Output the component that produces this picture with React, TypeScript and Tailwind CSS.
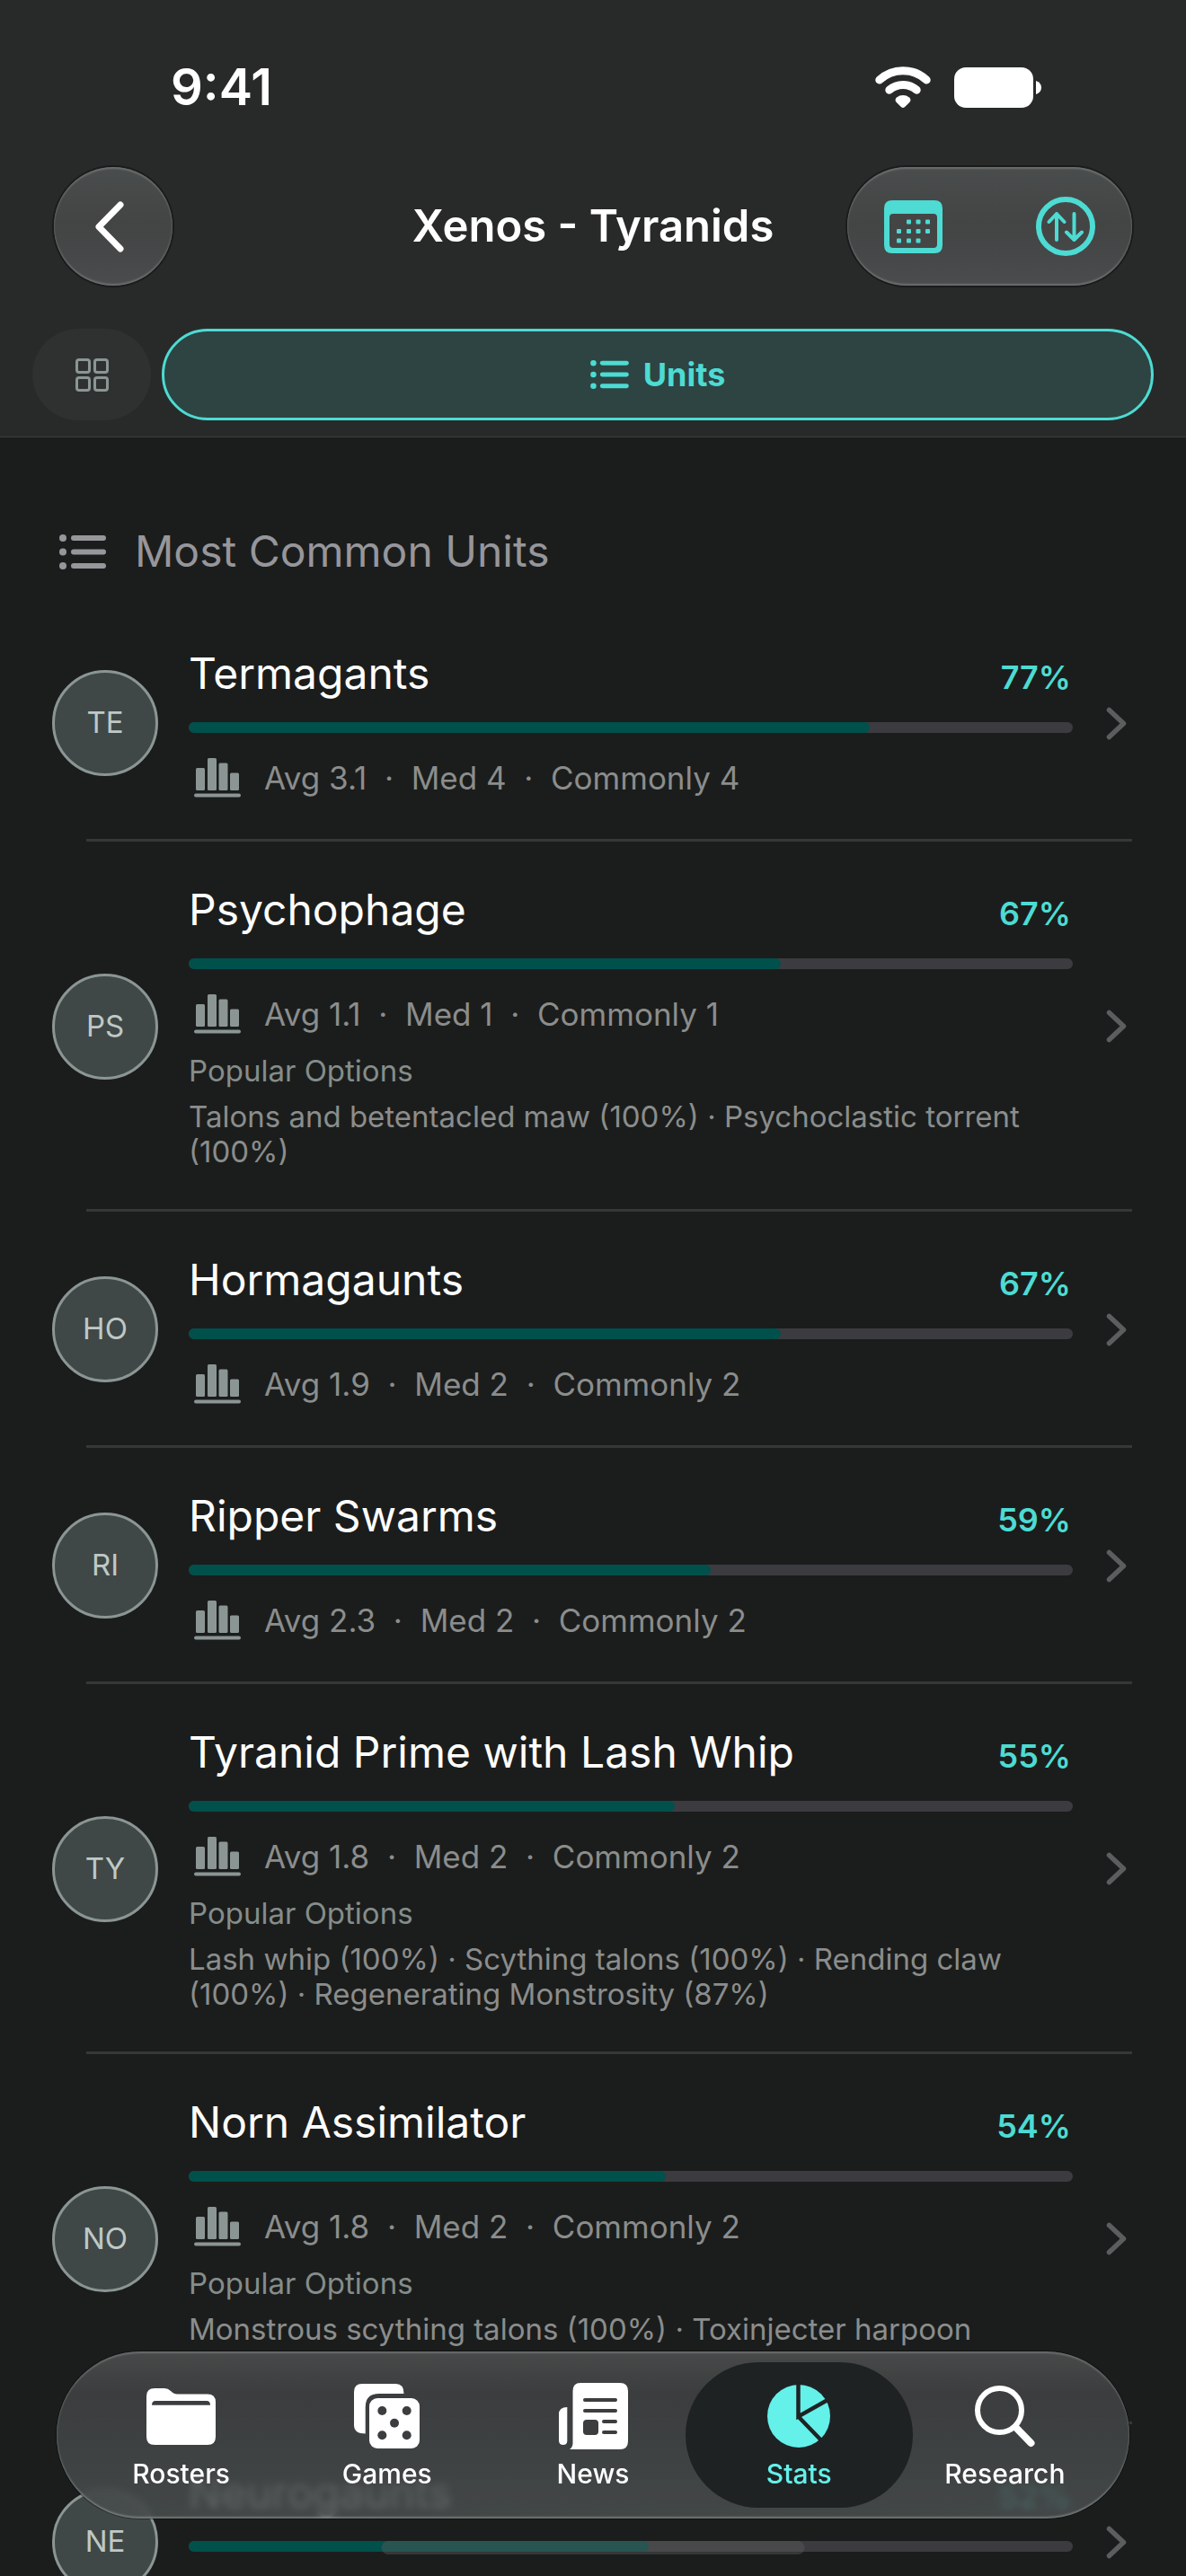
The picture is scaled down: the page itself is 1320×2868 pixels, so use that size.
import type { ReactNode } from "react";

interface Unit {
  initials: string;
  name: string;
  percent: number;
  avg: string;
  median: number;
  common: number;
  options?: string;
}

const UNITS: Unit[] = [
  { initials: "TE", name: "Termagants", percent: 77, avg: "3.1", median: 4, common: 4 },
  {
    initials: "PS",
    name: "Psychophage",
    percent: 67,
    avg: "1.1",
    median: 1,
    common: 1,
    options: "Talons and betentacled maw (100%) · Psychoclastic torrent (100%)",
  },
  { initials: "HO", name: "Hormagaunts", percent: 67, avg: "1.9", median: 2, common: 2 },
  { initials: "RI", name: "Ripper Swarms", percent: 59, avg: "2.3", median: 2, common: 2 },
  {
    initials: "TY",
    name: "Tyranid Prime with Lash Whip",
    percent: 55,
    avg: "1.8",
    median: 2,
    common: 2,
    options: "Lash whip (100%) · Scything talons (100%) · Rending claw (100%) · Regenerating Monstrosity (87%)",
  },
  {
    initials: "NO",
    name: "Norn Assimilator",
    percent: 54,
    avg: "1.8",
    median: 2,
    common: 2,
    options: "Monstrous scything talons (100%) · Toxinjecter harpoon",
  },
  { initials: "NE", name: "Neurogaunts", percent: 52, avg: "1.2", median: 1, common: 1 },
];

function WifiIcon() {
  return (
    <svg viewBox="0 0 62 46" className="h-[46px] w-[62px]" fill="none" stroke="currentColor" strokeWidth="9" strokeLinecap="round">
      <path d="M4.8 15A38.5 38.5 0 0 1 57.2 15" />
      <path d="M15.8 26.2A23 23 0 0 1 46.2 26.2" />
      <path d="M31 46Q30 46 28.6 44.8L23.8 40Q21.2 37 24 34.4Q27 32 31 32Q35 32 38 34.4Q40.8 37 38.2 40L33.4 44.8Q32 46 31 46Z" fill="currentColor" stroke="none" />
    </svg>
  );
}

function BatteryIcon() {
  return (
    <svg viewBox="0 0 98 45" className="h-[45px] w-[98px]" fill="currentColor">
      <rect width="88" height="45" rx="13" />
      <path d="M91 15Q97 17 97 22.5Q97 28 91 30Z" />
    </svg>
  );
}

function ListIcon({ className }: { className: string }) {
  return (
    <svg viewBox="0 0 52 39" className={className} fill="currentColor">
      {[4, 19.5, 35].map((y) => (
        <g key={y}>
          <circle cx="4" cy={y} r="4" />
          <rect x="13" y={y - 3} width="39" height="6" rx="3" />
        </g>
      ))}
    </svg>
  );
}

function GridIcon() {
  return (
    <svg viewBox="0 0 37 37" className="size-[37px]" fill="none" stroke="currentColor" strokeWidth="3">
      <rect x="1.5" y="1.5" width="14" height="14" rx="2.5" />
      <rect x="21.5" y="1.5" width="14" height="14" rx="2.5" />
      <rect x="1.5" y="21.5" width="14" height="14" rx="2.5" />
      <rect x="21.5" y="21.5" width="14" height="14" rx="2.5" />
    </svg>
  );
}

function CalendarIcon() {
  const dots = [
    [25, 21.5], [35.5, 21.5], [46, 21.5],
    [14, 32], [25, 32], [35.5, 32], [46, 32],
    [14, 42.5], [25, 42.5], [35.5, 42.5],
  ];
  return (
    <svg viewBox="0 0 65 59" className="h-[59px] w-[65px]" fill="currentColor">
      <path
        fillRule="evenodd"
        d="M9 0H56Q65 0 65 9V50Q65 59 56 59H9Q0 59 0 50V9Q0 0 9 0ZM10 15Q6 15 6 19V49Q6 53 10 53H55Q59 53 59 49V19Q59 15 55 15Z"
      />
      {dots.map(([x, y]) => (
        <rect key={`${x}-${y}`} x={x} y={y} width="5" height="5" rx="1" />
      ))}
    </svg>
  );
}

function SortIcon() {
  return (
    <svg viewBox="0 0 66 66" className="size-[66px]" fill="none" stroke="currentColor" strokeLinecap="round" strokeLinejoin="round">
      <circle cx="33" cy="33" r="30" strokeWidth="6" />
      <path strokeWidth="4" d="M23 48V19M14.5 28L23 19L31.5 28M42.5 19V48M34 39.5L42.5 48L51 39.5" />
    </svg>
  );
}

function ChartIcon() {
  return (
    <svg viewBox="0 0 52 44" className="h-11 w-[52px] shrink-0 text-[#8b9694]" fill="currentColor">
      <rect x="2" y="11" width="10" height="25" rx="1.5" />
      <rect x="15" y="0" width="10" height="36" rx="1.5" />
      <rect x="27.5" y="5.5" width="10" height="30.5" rx="1.5" />
      <rect x="40" y="16.5" width="10" height="19.5" rx="1.5" />
      <rect x="0" y="39.5" width="52" height="4" rx="2" />
    </svg>
  );
}

function FolderIcon() {
  return (
    <svg viewBox="0 0 77 63" className="h-[63px] w-[77px]" fill="currentColor">
      <path
        fillRule="evenodd"
        d="M9 0H20Q24 0 27 3L29 4.8Q31 6.5 34 6.5H68Q77 6.5 77 15.5V54Q77 63 68 63H9Q0 63 0 54V9Q0 0 9 0ZM10 14Q6 14 6 18.7H71Q71 14 67 14Z"
      />
    </svg>
  );
}

function DiceIcon() {
  return (
    <svg viewBox="0 0 73 72" className="h-[72px] w-[73px]" fill="currentColor">
      <path d="M9 0H46.5Q55.5 0 55.5 11H28Q12.7 11 12.7 26V55.5Q0 55.5 0 46V9Q0 0 9 0Z" />
      <rect x="17" y="16" width="56" height="56" rx="9" />
      <g className="fill-[#3b3d3e]">
        <circle cx="31.3" cy="30" r="5" />
        <circle cx="58.7" cy="30" r="5" />
        <circle cx="45" cy="43.7" r="5" />
        <circle cx="31.3" cy="57.3" r="5" />
        <circle cx="58.7" cy="57.3" r="5" />
      </g>
    </svg>
  );
}

function NewsIcon() {
  return (
    <svg viewBox="0 0 77 74" className="h-[74px] w-[77px]" fill="currentColor">
      <path d="M9.3 27V64.5Q9.3 69 4.7 69Q0 69 0 64V35Q0 27 9.3 27Z" />
      <path d="M24 0H68Q77 0 77 9V65Q77 74 68 74H12Q15.5 71.5 15.5 67V9Q15.5 0 24 0Z" />
      <g className="fill-[#3b3d3e]">
        <rect x="27" y="17" width="38" height="4" rx="2" />
        <rect x="27" y="29" width="38" height="4" rx="2" />
        <rect x="27" y="41" width="17" height="17" rx="4" />
        <rect x="48" y="41" width="17" height="4" rx="2" />
        <rect x="48" y="53" width="17" height="4" rx="2" />
      </g>
    </svg>
  );
}

function PieIcon() {
  return (
    <svg viewBox="0 0 70 70" className="size-[70px]" fill="currentColor">
      <circle cx="35" cy="35" r="35" />
      <path d="M34.5 -2V35.5L68 16.5M34.5 35.5L61 63" fill="none" className="stroke-[#1f2223]" strokeWidth="4.5" />
    </svg>
  );
}

function SearchIcon() {
  return (
    <svg viewBox="0 0 67 69" className="h-[69px] w-[67px]" fill="none" stroke="currentColor" strokeLinecap="round">
      <circle cx="27.5" cy="27.5" r="24.5" strokeWidth="6" />
      <path d="M45.5 46.5L62.5 64" strokeWidth="8" />
    </svg>
  );
}

function UnitRow({ unit }: { unit: Unit }) {
  return (
    <li>
      <a href="#unit" className="flex items-center pt-[46px] pr-[66px] pb-11 pl-[58px]">
        <span className="flex size-[118px] shrink-0 items-center justify-center rounded-full border-3 border-[#8b9694] bg-[#3f4846] text-[33px] text-[#bfc8c6]">
          {unit.initials}
        </span>

        <div className="ml-[34px] min-w-0 flex-1">
          <div className="flex items-baseline justify-between">
            <h3 className="text-[48px] leading-[60px] text-white">{unit.name}</h3>
            <span className="pr-[2px] text-[36px] leading-10 font-semibold text-[#4ddbd3]">{unit.percent}%</span>
          </div>

          {/* Usage bar */}
          <div className="mt-6 h-3 overflow-hidden rounded-full bg-[#3c3c40]">
            <div className="h-full rounded-full bg-[#00504c]" style={{ width: `${unit.percent}%` }} />
          </div>

          <div className="mt-[26px] flex items-center gap-[26px] pl-[6px]">
            <ChartIcon />
            <span className="text-[35px] leading-[48px] whitespace-pre text-[#8b8d8c]">
              {`Avg ${unit.avg}  ·  Med ${unit.median}  ·  Commonly ${unit.common}`}
            </span>
          </div>

          {unit.options && (
            <>
              <p className="mt-5 text-[33px] leading-[39px] text-[#848d8b]">Popular Options</p>
              {/* Always reserves two lines */}
              <p className="mt-3 min-h-[78px] text-[33px] leading-[39px] text-[#8b8d8c]">{unit.options}</p>
            </>
          )}
        </div>

        <svg viewBox="0 0 23 37" className="ml-[37px] h-[37px] w-[23px] shrink-0 text-[#5c5d5f]" fill="none" stroke="currentColor" strokeWidth="5.5" strokeLinecap="round" strokeLinejoin="round">
          <path d="M3.5 3.5L19.5 18.5L3.5 33.5" />
        </svg>
      </a>
      <div className="mr-[60px] ml-24 h-[3px] bg-[#363837]" />
    </li>
  );
}

function TabItem({ label, icon, active }: { label: string; icon: ReactNode; active?: boolean }) {
  return (
    <button
      type="button"
      className={`-mx-3 flex h-[162px] flex-1 flex-col items-center rounded-full pt-5 ${
        active ? "bg-[#1f2223] text-[#63f1ea]" : "text-white"
      }`}
    >
      <span className="flex h-20 items-center">{icon}</span>
      <span className="mt-1 text-[30px] leading-10 font-medium">{label}</span>
    </button>
  );
}

export default function App() {
  const glass =
    "bg-linear-to-b from-[#4a4d4d] via-[#434444] to-[#4a4c4d] shadow-[inset_0_2px_2px_rgba(255,255,255,0.2),inset_0_-2px_2px_rgba(255,255,255,0.2),0_0_0_2px_rgba(0,0,0,0.35)]";

  return (
    <div className="relative flex h-screen flex-col overflow-hidden bg-[#1b1d1c] font-['Inter',sans-serif]">
      <header className="shrink-0 border-b border-[#3c3e3e] bg-[#282a2a] pb-[18px]">
        {/* Status bar */}
        <div className="flex h-[186px] items-start justify-between pt-[66px] pr-[160px] pl-[190px] text-white">
          <span className="text-[56px] leading-[62px] font-semibold">9:41</span>
          <div className="flex h-[62px] items-center gap-[26px]">
            <WifiIcon />
            <BatteryIcon />
          </div>
        </div>

        {/* Navigation bar */}
        <div className="grid grid-cols-[1fr_auto_1fr] items-center px-[60px]">
          <button type="button" aria-label="Back" className={`flex size-[132px] items-center justify-center rounded-full pr-[9px] text-white ${glass}`}>
            <svg viewBox="0 0 33 57" className="h-[57px] w-[33px]" fill="none" stroke="currentColor" strokeWidth="7" strokeLinecap="round" strokeLinejoin="round">
              <path d="M29 4L5 28.5L29 53" />
            </svg>
          </button>
          <h1 className="text-[49px] leading-[60px] font-semibold text-white">Xenos - Tyranids</h1>
          <div className={`flex h-[132px] w-[317px] items-center justify-between justify-self-end rounded-full px-[41px] text-[#4ddbd3] ${glass}`}>
            <button type="button" aria-label="Date range">
              <CalendarIcon />
            </button>
            <button type="button" aria-label="Sort">
              <SortIcon />
            </button>
          </div>
        </div>

        {/* View switcher */}
        <div className="mt-12 flex gap-3 px-9">
          <button type="button" aria-label="Grid" className="flex h-[102px] w-[132px] items-center justify-center rounded-full bg-[#2f3131] text-[#8b9694]">
            <GridIcon />
          </button>
          <button type="button" className="flex h-[102px] flex-1 items-center justify-center gap-4 rounded-full border-3 border-[#4ddbd3] bg-[#2d4442] text-[36px] font-bold text-[#4ddbd3]">
            <ListIcon className="h-[32px] w-[43px]" />
            Units
          </button>
        </div>
      </header>

      <main>
        <h2 className="flex items-center gap-8 px-[66px] pt-[97px] pb-[30px] text-[48px] leading-[60px] text-[#96969b]">
          <ListIcon className="h-[39px] w-[52px]" />
          Most Common Units
        </h2>
        <ul>
          {UNITS.map((unit) => (
            <UnitRow key={unit.initials} unit={unit} />
          ))}
        </ul>
      </main>

      {/* Home indicator */}
      <div className="absolute bottom-6 left-1/2 h-[15px] w-[471px] -translate-x-1/2 rounded-full bg-[#585858]/45" />

      {/* Tab bar */}
      <nav className="absolute inset-x-[63px] bottom-16 flex items-center rounded-full bg-linear-to-b from-[#484a4a] via-[#3b3d3e] via-25% to-[#4a4f4f]/85 px-6 py-3 shadow-[inset_0_2px_2px_rgba(255,255,255,0.2),inset_0_-2px_2px_rgba(255,255,255,0.25),0_0_0_1px_rgba(0,0,0,0.4)] backdrop-blur-xs">
        <TabItem label="Rosters" icon={<FolderIcon />} />
        <TabItem label="Games" icon={<DiceIcon />} />
        <TabItem label="News" icon={<NewsIcon />} />
        <TabItem label="Stats" icon={<PieIcon />} active />
        <TabItem label="Research" icon={<SearchIcon />} />
      </nav>
    </div>
  );
}
